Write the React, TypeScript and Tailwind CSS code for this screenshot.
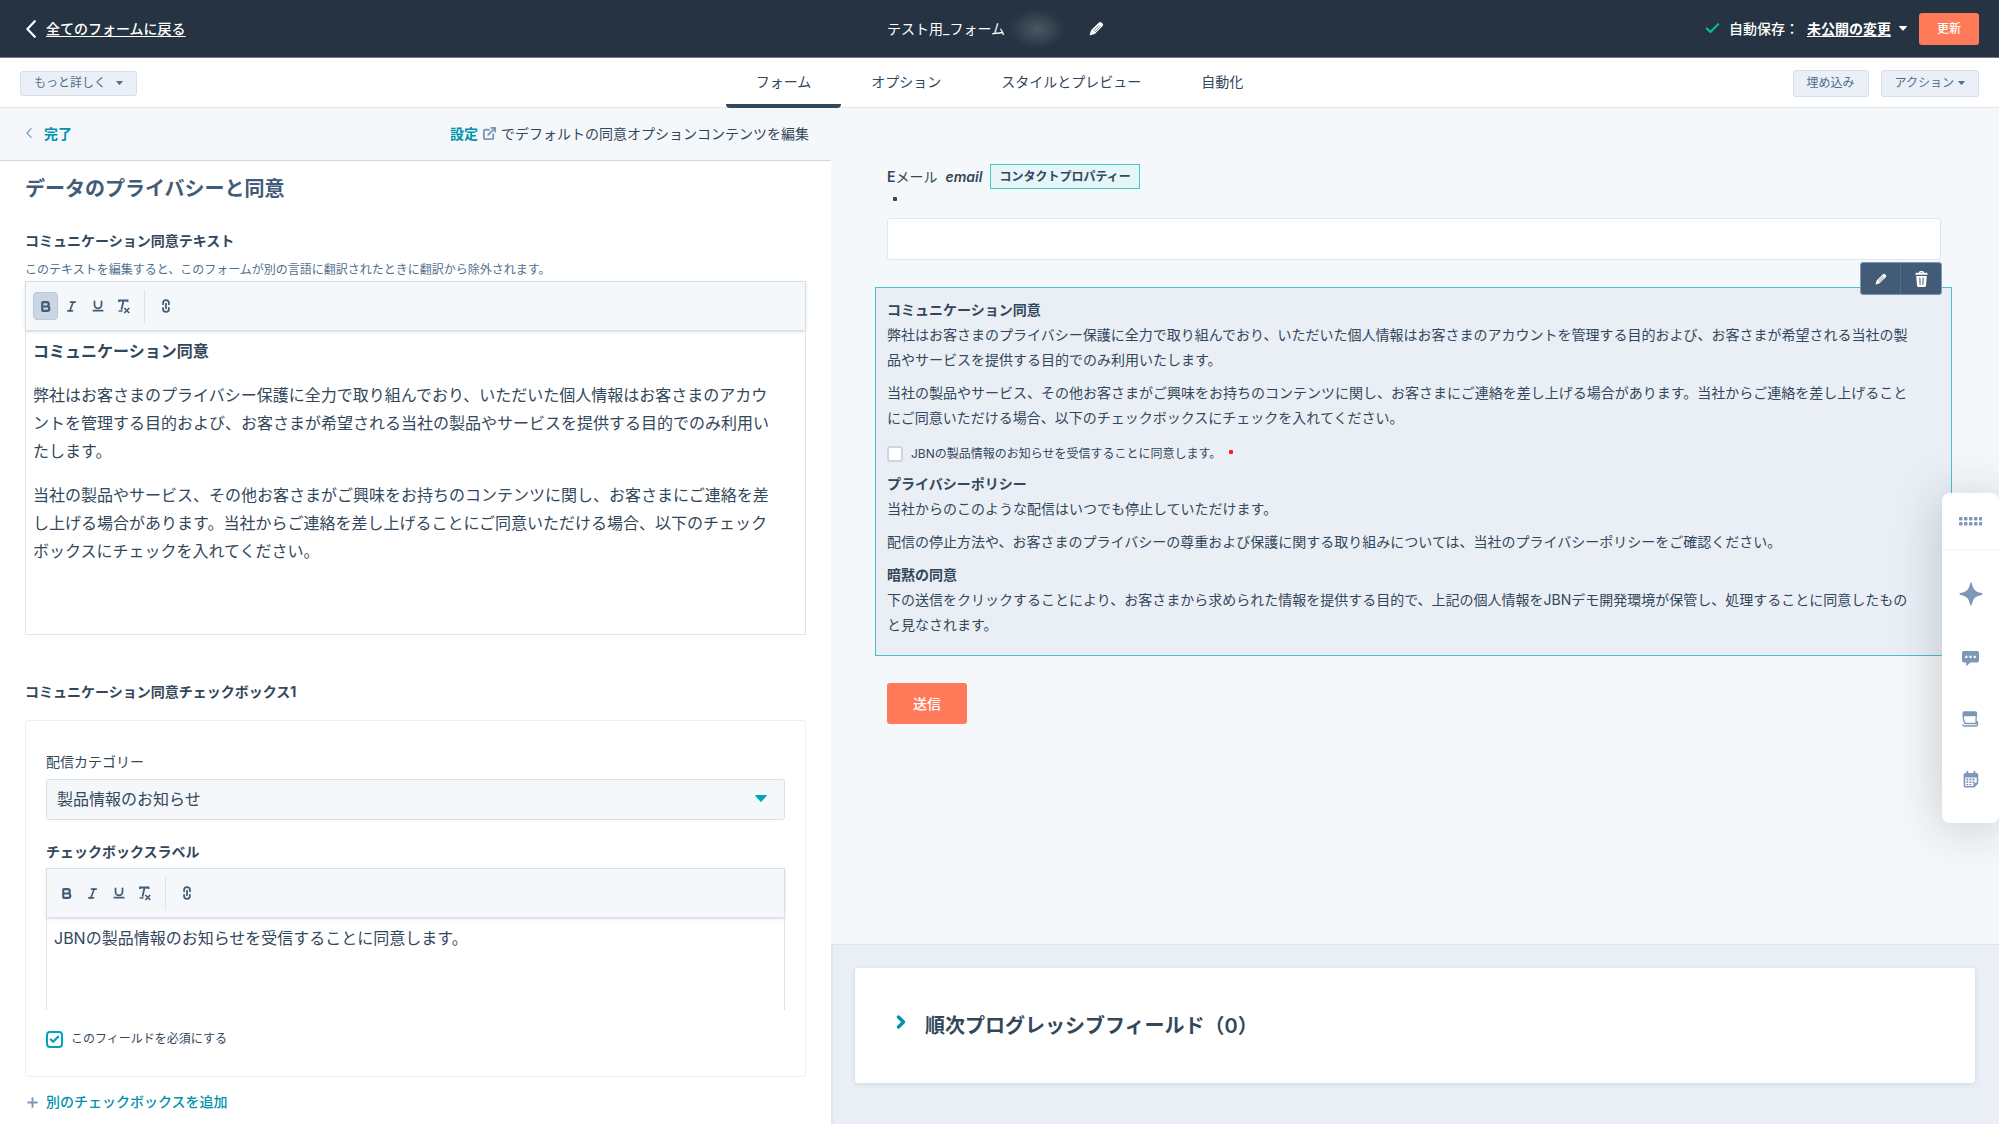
import type { ReactNode } from "react";
import { Bold, Check, ChevronRight, ExternalLink, Italic, Link2, Plus, Underline } from "lucide-react";

const TABS = ["フォーム", "オプション", "スタイルとプレビュー", "自動化"];

const Caret = ({ className = "" }: { className?: string }) => (
  <svg viewBox="0 0 10 6" className={className} fill="currentColor" aria-hidden="true">
    <path d="M0.6 0h8.8c.5 0 .7.5.4.8L5.5 5.6a.7.7 0 0 1-1 0L.2.8C-.1.5.1 0 .6 0z" />
  </svg>
);

const BackChevron = ({ className = "" }: { className?: string }) => (
  <svg viewBox="0 0 10 18" className={className} fill="none" stroke="currentColor" aria-hidden="true">
    <path d="M8.800 1.200L1.400 9l7.400 7.800" strokeWidth="2.200" strokeLinecap="round" strokeLinejoin="round" />
  </svg>
);

const Pencil = ({ className = "" }: { className?: string }) => (
  <svg viewBox="0 0 16 16" className={className} aria-hidden="true">
    <path
      fill="currentColor"
      d="M10.600 1.700a2 2 0 0 1 2.800 0l1 1a2 2 0 0 1 0 2.800l-8.300 8.300-4.700 1.400a.5.5 0 0 1-.6-.6l1.400-4.700z"
    />
    <path d="M4.600 10.600l6.200-6.200M6.200 11.800l6-6" stroke="#425b76" strokeWidth="0.800" />
  </svg>
);

const Trash = ({ className = "" }: { className?: string }) => (
  <svg viewBox="0 0 14 18" className={className} aria-hidden="true">
    <path
      fill="currentColor"
      d="M4.300 2.300C4.300 1 5 .3 6.200.3h1.600c1.200 0 1.900.7 1.900 2h2.600c.8 0 1.200.4 1.200 1.200v1H.500v-1c0-.8.4-1.200 1.200-1.200zM5.700 2.300h2.600c0-.5-.2-.7-.6-.7H6.300c-.4 0-.6.2-.6.7zM1.300 5.700h11.400l-.8 10.100c-.1 1.200-.8 1.900-2 1.900H4.100c-1.200 0-1.900-.7-2-1.900z"
    />
    <path d="M5.200 8l.3 6.800M8.800 8l-.3 6.800" stroke="#425b76" strokeWidth="1.100" strokeLinecap="round" />
  </svg>
);

const ClearFormat = () => (
  <svg width="14" height="15" viewBox="0 0 14 15" fill="none" stroke="currentColor" aria-hidden="true">
    <path d="M2 3V1.500h8.500V3M6.600 1.500L4.400 10.800" strokeWidth="1.800" />
    <path d="M1.500 12h4" strokeWidth="1.400" />
    <path d="M7.300 9l5 5M12.300 9l-5 5" strokeWidth="1.600" />
  </svg>
);

interface EditorProps {
  label: string;
  boldActive?: boolean;
  bodyClass: string;
  children: ReactNode;
}

const tool = "flex h-7 w-[25px] items-center justify-center rounded-sm";

const RichEditor = ({ label, boldActive = false, bodyClass, children }: EditorProps) => (
  <div className="text-[#33475b]">
    {/* Toolbar */}
    <div className="flex h-[50px] items-center gap-px border border-[#d6deea] bg-[#f5f8fa] px-[7px] text-[#425b76] shadow-sm">
      <button
        type="button"
        aria-label="太字"
        className={`${tool} ${boldActive ? "border border-[#b9c8da] bg-[#cbd6e2]" : ""}`}
      >
        <Bold size={13} strokeWidth={4} />
      </button>
      <button type="button" aria-label="斜体" className={tool}>
        <Italic size={13} strokeWidth={3} />
      </button>
      <button type="button" aria-label="下線" className={tool}>
        <Underline size={14} strokeWidth={3} />
      </button>
      <button type="button" aria-label="書式をクリア" className={tool}>
        <ClearFormat />
      </button>
      <span className="mx-[7px] h-[33px] w-px bg-[#dfe3eb]" />
      <button type="button" aria-label="リンク" className={tool}>
        <Link2 size={14} strokeWidth={3} className="rotate-90" />
      </button>
    </div>
    <div
      role="textbox"
      aria-label={label}
      aria-multiline="true"
      contentEditable
      suppressContentEditableWarning
      className={`border-x border-[#dfe3eb] pt-[6px] pl-[7px] text-[16px] leading-7 outline-none ${bodyClass}`}
    >
      {children}
    </div>
  </div>
);

const Header = () => (
  <header className="grid h-[58px] grid-cols-[1fr_auto_1fr] items-center border-b border-[#6b7683] bg-[#253342] px-5 text-[14px] text-white">
    <a href="#" className="flex items-center gap-[10px] pl-[6px] font-medium">
      <BackChevron className="h-[18px] w-[10px] shrink-0" />
      <span className="underline underline-offset-2">全てのフォームに戻る</span>
    </a>
    <div className="flex items-center pr-2">
      <h1>テスト用_フォーム</h1>
      <span className="ml-1 h-10 w-14 bg-[radial-gradient(closest-side,#4c5763,#253342)]" />
      <button type="button" aria-label="名前を編集" className="ml-6">
        <Pencil className="size-[15px]" />
      </button>
    </div>
    <div className="flex items-center justify-end">
      <Check size={17} strokeWidth={3} className="mr-2 text-[#00bda5]" />
      <span className="font-medium">自動保存：</span>
      <button type="button" className="mr-3 ml-2 flex items-center gap-2 font-bold">
        <span className="underline underline-offset-2">未公開の変更</span>
        <Caret className="h-[5px] w-2" />
      </button>
      <button type="button" className="h-8 w-[60px] rounded-[3px] bg-[#ff7a59] text-[12px] font-medium">
        更新
      </button>
    </div>
  </header>
);

const smallButton =
  "flex items-center rounded-[3px] border border-[#d5dfeb] bg-[#eaf0f6] text-[12px] text-[#506e91]";

const Nav = () => (
  <nav className="grid h-[50px] grid-cols-[1fr_auto_1fr] items-center border-b border-[#dfe6ee] bg-white px-5">
    <button type="button" className={`${smallButton} h-[25px] gap-[10px] justify-self-start px-[13px]`}>
      もっと詳しく
      <Caret className="h-1 w-[7px]" />
    </button>
    <div className="flex h-[50px] text-[14px]">
      {TABS.map((tab, i) => (
        <a
          key={tab}
          href="#"
          aria-current={i === 0 ? "page" : undefined}
          className={`flex items-center border-b-4 px-[30px] ${
            i === 0 ? "rounded-b-sm border-[#33475b]" : "border-transparent"
          }`}
        >
          {tab}
        </a>
      ))}
    </div>
    <div className="flex justify-end gap-3">
      <button type="button" className={`${smallButton} h-[27px] px-[13px]`}>
        埋め込み
      </button>
      <button type="button" className={`${smallButton} h-[27px] gap-1 px-[13px]`}>
        アクション
        <Caret className="h-1 w-[7px]" />
      </button>
    </div>
  </nav>
);

const ConsentSettings = () => (
  <section className="w-[831px] shrink-0 bg-white">
    <div className="flex h-[53px] items-center justify-between border-b border-[#cfd9e6] bg-[#f5f8fa] pr-[22px] pb-[2px] pl-[26px] text-[14px]">
      <a href="#" className="flex items-center gap-3 font-bold text-[#0091ae]">
        <BackChevron className="h-[10px] w-[6px] text-[#7c98b6]" />
        完了
      </a>
      <p className="flex items-center">
        <a href="#" className="flex items-center gap-1 font-bold text-[#0091ae]">
          設定
          <ExternalLink size={15} strokeWidth={3} className="text-[#7c98b6]" />
        </a>
        <span className="ml-1">でデフォルトの同意オプションコンテンツを編集</span>
      </p>
    </div>

    <div className="px-[25px] pt-[14px]">
      <h2 className="text-[20px] leading-7 font-semibold text-[#425b76]">データのプライバシーと同意</h2>

      <h3 className="mt-7 text-[14px] leading-5 font-bold">コミュニケーション同意テキスト</h3>
      <p className="mt-[9px] mb-px text-[12px] leading-5 text-[#516f90]">
        このテキストを編集すると、このフォームが別の言語に翻訳されたときに翻訳から除外されます。
      </p>
      <RichEditor
        label="コミュニケーション同意テキスト"
        boldActive
        bodyClass="h-[304px] space-y-4 border-b pr-7"
      >
        <p className="font-bold">コミュニケーション同意</p>
        <p>
          弊社はお客さまのプライバシー保護に全力で取り組んでおり、いただいた個人情報はお客さまのアカウントを管理する目的および、お客さまが希望される当社の製品やサービスを提供する目的でのみ利用いたします。
        </p>
        <p>
          当社の製品やサービス、その他お客さまがご興味をお持ちのコンテンツに関し、お客さまにご連絡を差し上げる場合があります。当社からご連絡を差し上げることにご同意いただける場合、以下のチェックボックスにチェックを入れてください。
        </p>
      </RichEditor>

      <h3 className="mt-[47px] text-[14px] leading-5 font-bold">コミュニケーション同意チェックボックス1</h3>
      <div className="mt-[18px] rounded-[3px] border border-[#eaf0f6] px-5 pt-[31px] pb-[27px]">
        <label htmlFor="category" className="block text-[14px] leading-5">
          配信カテゴリー
        </label>
        <div className="relative mt-[7px]">
          <select
            id="category"
            className="h-[41px] w-full appearance-none rounded-[3px] border border-[#d6e0ea] bg-[#f5f8fa] px-[10px] pb-[2px] text-[16px]"
          >
            <option>製品情報のお知らせ</option>
          </select>
          <Caret className="pointer-events-none absolute top-4 right-[18px] h-[7px] w-3 text-[#00a4bd]" />
        </div>

        <h4 className="mt-[22px] mb-[6px] text-[14px] leading-5 font-bold">チェックボックスラベル</h4>
        <RichEditor label="チェックボックスラベル" bodyClass="h-[92px] pr-4">
          <p>JBNの製品情報のお知らせを受信することに同意します。</p>
        </RichEditor>

        <label className="mt-[19px] flex items-center gap-2 text-[12px] leading-5">
          <span className="grid place-items-center">
            <input
              type="checkbox"
              defaultChecked
              className="peer col-start-1 row-start-1 size-[17px] appearance-none rounded-[4px] border-2 border-[#00a4bd] bg-white"
            />
            <Check
              size={11}
              strokeWidth={5}
              className="pointer-events-none invisible col-start-1 row-start-1 text-[#00a4bd] peer-checked:visible"
            />
          </span>
          このフィールドを必須にする
        </label>
      </div>

      <button type="button" className="mt-[15px] flex items-center gap-[6px] text-[14px] leading-5 font-medium text-[#0091ae]">
        <Plus size={15} strokeWidth={3} className="text-[#7c98b6]" />
        別のチェックボックスを追加
      </button>
    </div>
  </section>
);

const Preview = () => (
  <section className="flex min-w-0 flex-1 flex-col bg-[#f5f8fa]">
    <form className="flex-1 pt-[56px] pr-[47px] pl-[44px]">
      <div className="pr-[11px] pl-3">
        <label htmlFor="email" className="flex h-[25px] items-center text-[14px]">
          <span>
            <span className="font-semibold">E</span>メール
          </span>
          <em className="mx-2 font-semibold">email</em>
          <span className="border border-[#3ccfbe] bg-[#e5f5f8] px-2 text-[12px] leading-[23px] font-bold">
            コンタクトプロパティー
          </span>
        </label>
        <div className="flex h-[29px] items-start px-1 pt-[6px]" aria-hidden="true">
          <span className="m-[2px] size-1 rounded-[1px] bg-[#33475b]" />
        </div>
        <input
          id="email"
          type="email"
          required
          className="block h-[42px] w-full rounded-[3px] border border-[#dfe6ee] bg-white px-3 text-[16px]"
        />
      </div>

      {/* Selected consent block */}
      <div className="relative mt-[27px] border border-[#4dbdcf] bg-[#eaeff6] pt-[9px] pr-8 pb-[18px] pl-[11px] text-[14px] leading-[25px]">
        <div className="absolute -top-[26px] right-[9px] flex h-[33px] overflow-hidden rounded-[3px] border border-[#7c98b6] bg-[#425b76] text-white">
          <button type="button" aria-label="編集" className="grid w-10 place-items-center border-r border-[#516f90]">
            <Pencil className="size-3" />
          </button>
          <button type="button" aria-label="削除" className="grid w-10 place-items-center">
            <Trash className="h-[18px] w-[13px]" />
          </button>
        </div>

        <h4 className="font-bold">コミュニケーション同意</h4>
        <p>
          弊社はお客さまのプライバシー保護に全力で取り組んでおり、いただいた個人情報はお客さまのアカウントを管理する目的および、お客さまが希望される当社の製品やサービスを提供する目的でのみ利用いたします。
        </p>
        <p className="mt-2">
          当社の製品やサービス、その他お客さまがご興味をお持ちのコンテンツに関し、お客さまにご連絡を差し上げる場合があります。当社からご連絡を差し上げることにご同意いただける場合、以下のチェックボックスにチェックを入れてください。
        </p>
        <label className="mt-[11px] mb-[5px] flex items-center gap-2 text-[12px]">
          <input
            type="checkbox"
            className="size-4 appearance-none rounded-[3px] border-2 border-[#cbd6e2] bg-white checked:border-[#00a4bd] checked:bg-[#00a4bd]"
          />
          JBNの製品情報のお知らせを受信することに同意します。
          <span className="mb-1 size-1 rounded-[1px] bg-[#ff2020]" />
        </label>
        <h4 className="font-bold">プライバシーポリシー</h4>
        <p>当社からのこのような配信はいつでも停止していただけます。</p>
        <p className="mt-2">
          配信の停止方法や、お客さまのプライバシーの尊重および保護に関する取り組みについては、当社のプライバシーポリシーをご確認ください。
        </p>
        <h4 className="mt-2 font-bold">暗黙の同意</h4>
        <p>
          下の送信をクリックすることにより、お客さまから求められた情報を提供する目的で、上記の個人情報をJBNデモ開発環境が保管し、処理することに同意したものと見なされます。
        </p>
      </div>

      <button type="submit" className="mt-[27px] ml-3 h-[41px] w-20 rounded-[3px] bg-[#ff7a59] text-[14px] font-medium text-white">
        送信
      </button>
    </form>

    {/* Progressive fields */}
    <div className="border-t border-l-2 border-[#dde5ed] bg-[#eaeff6] pt-[23px] pr-6 pb-[41px] pl-[22px]">
      <button
        type="button"
        className="flex h-[115px] w-full items-center gap-[14px] rounded-[3px] bg-white pl-9 text-[20px] font-semibold shadow-[0_1px_5px_rgba(45,62,80,0.14)]"
      >
        <ChevronRight size={20} strokeWidth={4} className="mb-2 text-[#0091ae]" />
        順次プログレッシブフィールド（0）
      </button>
    </div>
  </section>
);

const railButton = "grid h-[60px] w-full place-items-center";

const ToolRail = () => (
  <aside className="fixed top-[493px] right-0 w-[57px] rounded-lg bg-white pb-[14px] text-[#7c98b6] shadow-[0_4px_50px_rgba(20,30,40,0.22)]">
    <button type="button" aria-label="移動" className="grid h-[57px] w-full place-items-center border-b border-[#f2f5f8]">
      <svg width="23" height="9" viewBox="0 0 23 9" fill="currentColor">
        {[0, 5, 10, 15, 20].map((x) => (
          <g key={x}>
            <rect x={x} y="0" width="3.500" height="3.500" rx="1" />
            <rect x={x} y="5" width="3.500" height="3.500" rx="1" />
          </g>
        ))}
      </svg>
    </button>
    <button type="button" aria-label="アシスタント" className="grid h-[79px] w-full place-items-center pt-2">
      <svg width="24" height="24" viewBox="0 0 24 24" fill="currentColor">
        <path d="M12 .5c.5 0 .7.3.8.7 1.3 6.300 3.300 8.500 9.800 9.900.6.1.9.4.9.9s-.3.8-.9.9c-6.500 1.400-8.500 3.600-9.800 9.900-.1.4-.3.7-.8.7s-.7-.3-.8-.7c-1.300-6.300-3.300-8.500-9.800-9.900-.6-.1-.9-.4-.9-.9s.3-.8.9-.9c6.500-1.400 8.500-3.600 9.800-9.900.1-.4.3-.7.8-.7z" />
      </svg>
    </button>
    <button type="button" aria-label="コメント" className={railButton}>
      <svg width="17" height="16" viewBox="0 0 17 16">
        <path fill="currentColor" d="M2 0h13a2 2 0 0 1 2 2v7.500a2 2 0 0 1-2 2H8.200L5 14.800c-.4.400-.8.200-.8-.300v-3H2a2 2 0 0 1-2-2V2a2 2 0 0 1 2-2z" />
        <path fill="#fff" d="M3.200 4.700h2.200v2.200H3.200zM7.400 4.700h2.200v2.200H7.400zM11.600 4.700h2.200v2.200h-2.200z" />
      </svg>
    </button>
    <button type="button" aria-label="ナレッジ" className={railButton}>
      <svg width="17" height="16" viewBox="0 0 17 16">
        <path fill="currentColor" d="M2 .2h11.500a1.600 1.600 0 0 1 1.600 1.600v3.400H.6V1.800A1.600 1.600 0 0 1 2 .2z" />
        <path
          fill="none"
          stroke="currentColor"
          strokeWidth="1.300"
          d="M1.200 4.500c0 3.500.5 6 2 8h11.300c-.8-2-.5-5-.2-8M.7 13.500c.3 1 .8 1.500 1.800 1.500h11.500c1.200 0 1.600-.8 1.700-2l-.6-3"
        />
      </svg>
    </button>
    <button type="button" aria-label="カレンダー" className={railButton}>
      <svg width="16" height="17" viewBox="0 0 16 17">
        <path
          fill="currentColor"
          d="M3.500.7a.9.900 0 0 1 1.800 0V2h5.200V.7a.9.900 0 0 1 1.800 0V2h1.100A1.900 1.900 0 0 1 15.300 3.900v8.600l-4 4.100H2.500a1.900 1.900 0 0 1-1.900-1.900V3.900A1.900 1.900 0 0 1 2.500 2h1z"
        />
        <path fill="#fff" d="M2.200 6.500h11.500v5.300l-3 .2-.5 3H2.200z" />
        <path
          fill="currentColor"
          d="M3.300 7.600h2v2h-2zM6.400 7.600h2v2h-2zM9.500 7.600h2v2h-2zM3.300 10.400h2v1.600h-2zM6.400 10.400h2v1.600h-2zM9.500 10.400h2v1.600h-2zM3.300 12.900h2v1.300h-2zM6.400 12.900h2v1.300h-2z"
        />
      </svg>
    </button>
  </aside>
);

const App = () => {
  return (
    <div
      lang="ja"
      className="flex min-h-screen flex-col bg-white font-['Inter','Noto_Sans_CJK_JP',sans-serif] text-[#33475b]"
    >
      <Header />
      <Nav />
      <main className="flex flex-1">
        <ConsentSettings />
        <Preview />
      </main>
      <ToolRail />
    </div>
  );
};

export default App;
